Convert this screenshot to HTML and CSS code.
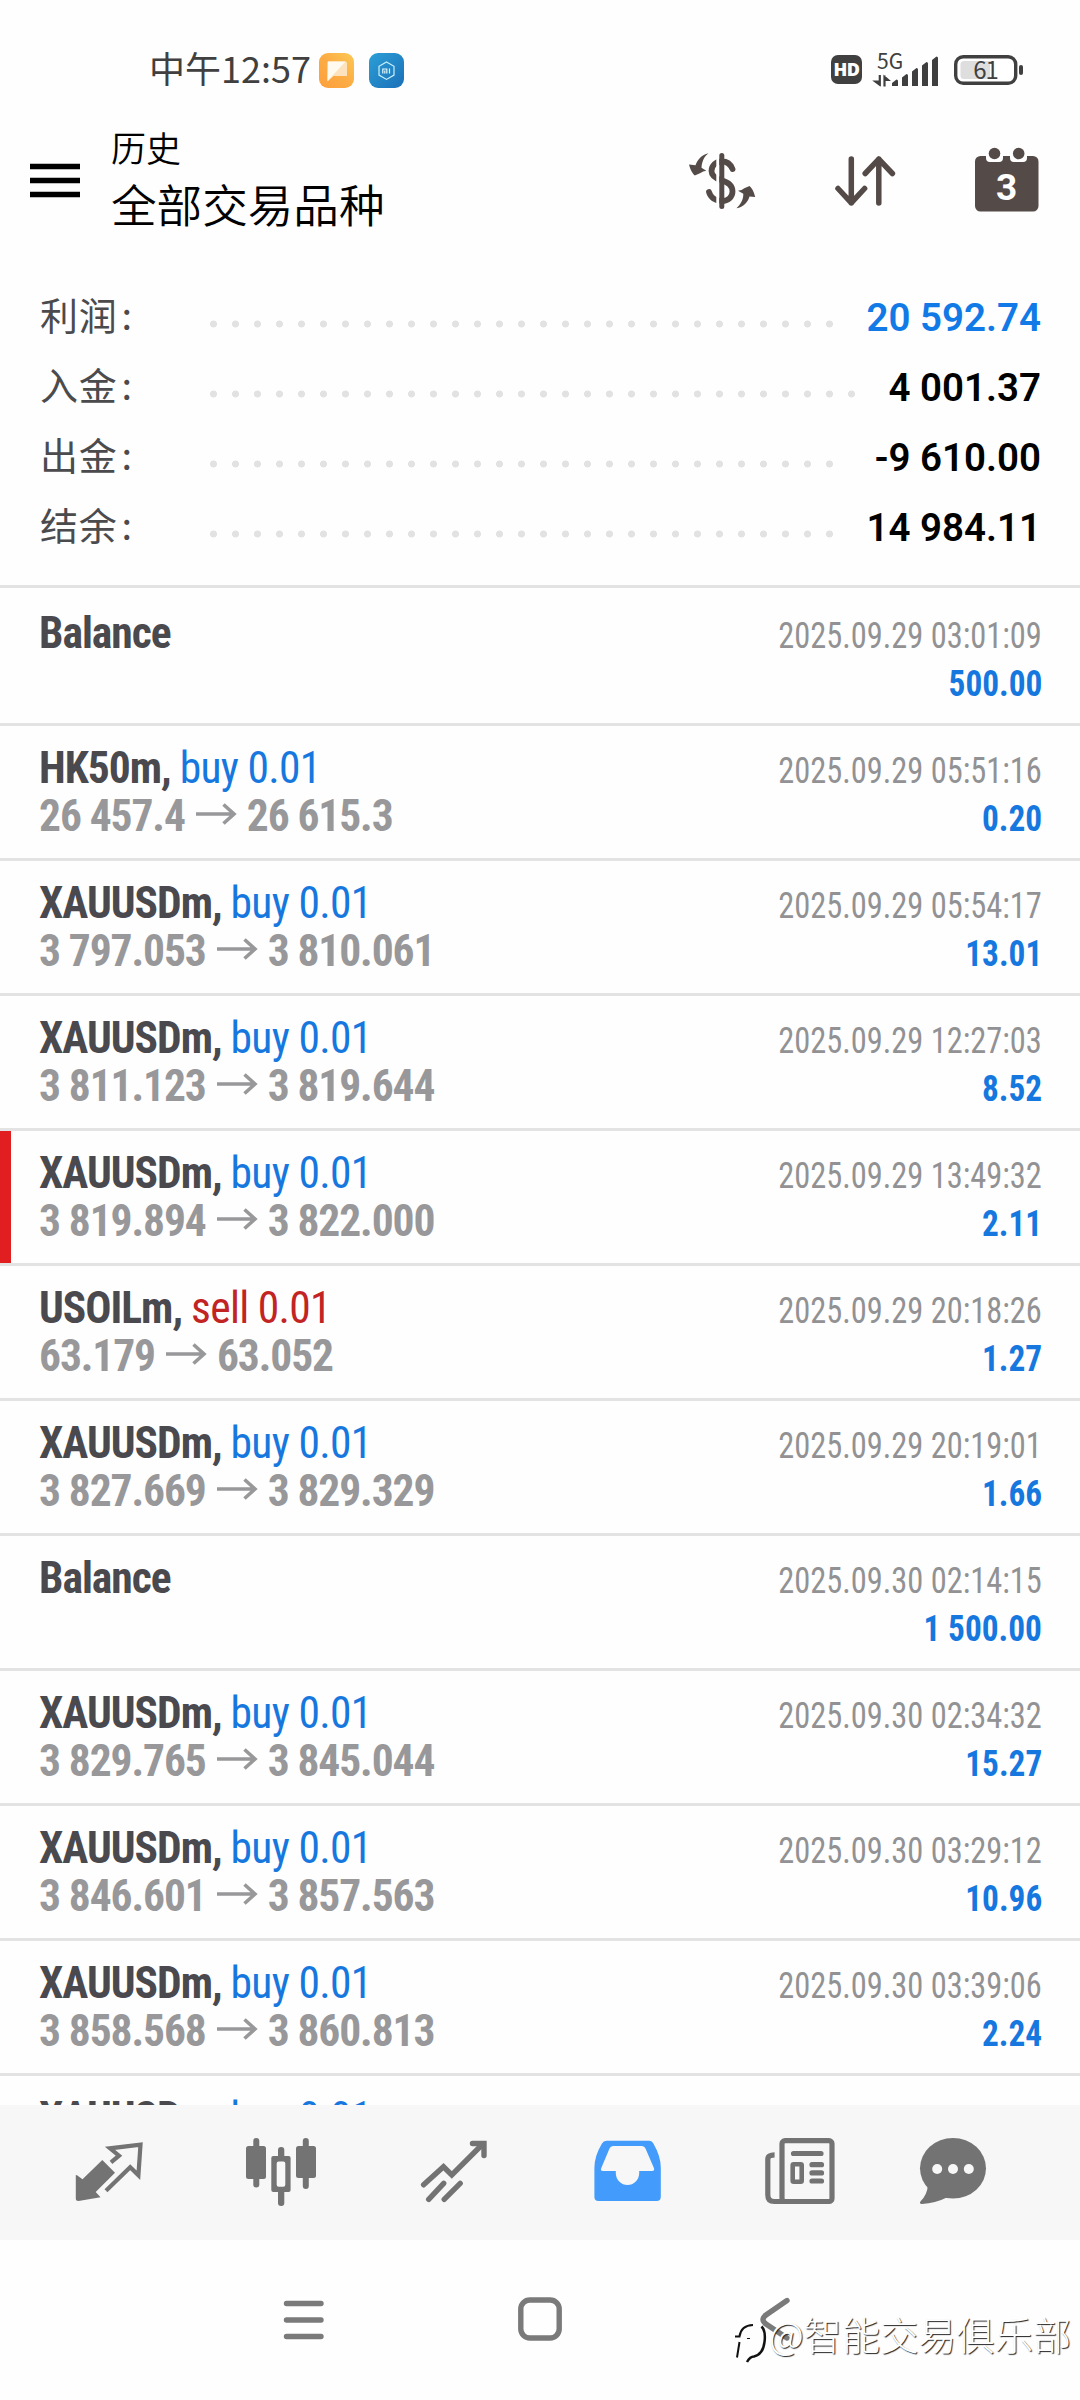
FILE: index.html
```html
<!DOCTYPE html>
<html lang="zh-CN">
<head>
<meta charset="utf-8">
<title>历史</title>
<link rel="stylesheet" href="styles.css">
</head>
<body>
<div class="screen">
  <div class="status">
    <span class="clock">中午12:57</span>
    <svg class="app-icon" width="35" height="35" viewBox="0 0 35 35">
      <defs>
        <linearGradient id="orange" x1="0" y1="1" x2="1" y2="0"><stop offset="0" stop-color="#fd9f3c"/><stop offset=".5" stop-color="#fcac44"/><stop offset="1" stop-color="#fcc954"/></linearGradient>
        <linearGradient id="blue" x1="0" y1="0" x2="1" y2="1"><stop offset="0" stop-color="#2b9fd6"/><stop offset="1" stop-color="#1b6fb8"/></linearGradient>
      </defs>
      <rect width="35" height="35" rx="9" fill="url(#orange)"/>
      <path d="M9 8.500h17.500a1.500 1.500 0 0 1 1.500 1.500v13H14.500L8.500 28.500V9z" fill="#fde3bd"/>
      <path d="M9 8.500h17.500L8.500 28z" fill="#fffaf0"/>
    </svg>
    <svg class="app-icon second" width="35" height="35" viewBox="0 0 35 35">
      <rect width="35" height="35" rx="9" fill="url(#blue)"/>
      <path d="M17.500 9l7.500 4.300v8.800l-7.500 4.300-7.500-4.300v-8.800z" fill="none" stroke="#c9f1fb" stroke-width="1.200"/>
      <path d="M13.800 20.500v-4.500h4v4.500M15.800 17.500v3M20.500 15.500v5" fill="none" stroke="#dff7fc" stroke-width="1.200"/>
    </svg>
    <div class="status-right">
      <span class="hd">HD</span>
      <svg class="signal" width="70" height="36" viewBox="0 0 70 36">
        <text x="5" y="17.500" class="net">5G</text>
        <path d="M7.800 24v11M3.500 30.500h4v3zM12.500 24.500v11M16 29h-3.500v-3z" class="sig-arrows"/>
        <path d="M20 35v-3l4.500-3.500q1.500 0 1.500 1.500v5zM30 35V26.500l4.500-3.500q1.500 0 1.500 1.500V35zM40 35V20.500l4.500-3.500q1.500 0 1.500 1.500V35zM50 35V14.500l4.500-3.500q1.500 0 1.500 1.500V35zM60 35V9l4.500-3.500q1.500 0 1.500 1.500V35z" fill="#3f3f3f"/>
      </svg>
      <svg class="battery" width="70" height="32" viewBox="0 0 70 32">
        <rect x="1.700" y="2.700" width="60" height="26.600" rx="7.500" fill="#fff" stroke="#404040" stroke-width="3.400"/>
        <path d="M10 7h26v18H10a3.500 3.500 0 0 1-3.500-3.500v-11A3.500 3.500 0 0 1 10 7z" fill="#dedede"/>
        <rect x="65" y="11" width="4" height="10" rx="2" fill="#404040"/>
        <text x="31.500" y="24.500" class="level">61</text>
      </svg>
    </div>
  </div>

  <header class="header">
    <svg class="menu" width="50" height="36" viewBox="0 0 50 36"><path d="M0 3.500h50M0 17.500h50M0 31.500h50" stroke="#000" stroke-width="5.500"/></svg>
    <div class="titles">
      <div class="sub">历史</div>
      <div class="main">全部交易品种</div>
    </div>
    <div class="actions">
      <svg width="90" height="80" viewBox="0 0 90 80">
        <g fill="none" stroke="#544a47" stroke-width="5.800" stroke-linecap="round">
          <path d="M52.500 29c-2-5-6-7.500-10.500-7.500-6 0-10.500 4-10.500 9.500 0 5 4 7.500 10.500 9.500 7 2 10.500 5.500 10.500 11 0 5.500-4.500 9.500-10.500 9.500-6.500 0-11.500-3.500-13-9"/>
        </g>
        <path d="M37.800 15v52" stroke="#fff" stroke-width="3"/>
        <path d="M41.800 15.500v51" stroke="#544a47" stroke-width="5" stroke-linecap="round"/>
        <path d="M28.500 13.200c-4 3-6.500 7.500-7 14.500l4.800 3q-3.500.5-5.800 2.200l-5.700 2.600q-4-3.500-5.800-11l6.500.8c2-5.500 6-10.500 13-12.100z" fill="#544a47"/>
        <path d="M56.500 68.300c4-4 7-8.500 6.800-14.500l-5.300-3q4-.5 6.300-2.500l5.200-2.300q3.500 2.500 5.700 11l-5.700-.6c-1.500 5.500-6 10.500-13 11.900z" fill="#544a47"/>
      </svg>
      <svg width="90" height="80" viewBox="0 0 90 80"><path d="M31.300 19v44M18 48.500l13.300 14.300 13.300-14.300M58.800 63V19M45.200 33.500l13.600-14.300 13.600 14.300" fill="none" stroke="#544a47" stroke-width="5.500" stroke-linecap="round" stroke-linejoin="round"/></svg>
      <svg width="90" height="80" viewBox="0 0 90 80">
        <rect x="15" y="16" width="63.500" height="55.500" rx="5.500" fill="#544a47"/>
        <path d="M26 12h17v6q0 4-4 4h-9q-4 0-4-4zM50 12h17v6q0 4-4 4h-9q-4 0-4-4z" fill="#fff"/>
        <circle cx="34.500" cy="13.500" r="5.800" fill="#544a47"/><circle cx="58.700" cy="13.500" r="5.800" fill="#544a47"/>
        <text x="46.700" y="59.800" class="day">3</text>
      </svg>
    </div>
  </header>

  <section class="summary">
    <div class="sum"><span class="label">利润<i>:</i></span><span class="dots"></span><b class="blue">20 592.74</b></div>
    <div class="sum"><span class="label">入金<i>:</i></span><span class="dots long"></span><b>4 001.37</b></div>
    <div class="sum"><span class="label">出金<i>:</i></span><span class="dots"></span><b>-9 610.00</b></div>
    <div class="sum"><span class="label">结余<i>:</i></span><span class="dots"></span><b>14 984.11</b></div>
  </section>

  <main class="list" id="list"></main>

  <nav class="tabs">
    <svg width="80" height="80" viewBox="0 0 80 80"><path d="M43 30.300l8-6.600-9-7.400 30.500-3.600-2.100 30.600-8.200-8L38 58.700" fill="none" stroke="#737373" stroke-width="4.200"/><path d="M9 43.300l5.500 3.900L34.300 28 47 40.700 27.700 60l4.800 5.300L10.500 69q-2.700 0-2.700-2.500V43z" fill="#737373"/></svg>
    <svg width="80" height="80" viewBox="0 0 80 80" fill="#737373"><rect x="12.300" y="6" width="6" height="49.500" rx="3"/><rect x="5" y="14" width="20" height="33" rx="2.500"/><rect x="61.800" y="6" width="6" height="51" rx="3"/><rect x="55" y="14" width="20" height="32" rx="2.500"/><rect x="37" y="15" width="6.300" height="59" rx="3"/><rect x="30.300" y="24" width="19.300" height="36" rx="2"/><rect x="35.700" y="29.500" width="8.600" height="25.300" rx="2" fill="#f7f7f7"/></svg>
    <svg width="80" height="80" viewBox="0 0 80 80" fill="none" stroke="#737373" stroke-width="5.400" stroke-linecap="round"><path d="M9.600 52.800l19.900-18L37.800 43l31-31M14.700 67.300l15-16M30.200 67.300l16-16" stroke-linejoin="miter"/><path d="M58.500 11.500H70v12"/></svg>
    <svg width="80" height="80" viewBox="0 0 80 80"><path fill-rule="evenodd" d="M19.500 8.700h42.500q3 0 4.500 3 7.300 12.500 7.300 24v29q0 4.300-4.300 4.300h-58q-4.100 0-4.100-4.300v-29q0-11.500 7.400-24 1.700-3 4.700-3zM26 14q-2.500 0-3.500 2.500L14.300 36q-1.300 3 1.700 3h12.800v2a11.700 12 0 0 0 23.400 0v-2H65q3 0 1.900-3l-8.400-19.500q-1-2.500-3.500-2.500z" fill="#439cfb"/></svg>
    <svg width="80" height="80" viewBox="0 0 80 80" fill="none" stroke="#737373" stroke-width="5.200"><rect x="22" y="8.700" width="50" height="60.800" rx="3"/><path d="M14.600 22.800q-6.800 0-6.800 4.500V63q0 6.500 6.500 6.500H25"/><path d="M33.500 21.500h27.500M52 32.700h9.500M52 40.900h9.500M52 49h9.500" stroke-linecap="round"/><rect x="32.700" y="32.200" width="9" height="17.500" rx="1" stroke-width="4.600"/></svg>
    <svg width="80" height="80" viewBox="0 0 80 80"><path d="M36 64.500Q22 71.500 9 72q-3.500-.5-1.200-3Q14 63 15 53z" fill="#737373"/><ellipse cx="40" cy="36.300" rx="33" ry="30.300" fill="#737373"/><g fill="#f7f7f7"><circle cx="24.200" cy="37" r="5"/><circle cx="40" cy="37" r="5"/><circle cx="55.800" cy="37" r="5"/></g></svg>
  </nav>

  <div class="sysnav">
    <svg width="44" height="44" viewBox="0 0 44 44"><path d="M4.500 6.500h34.500M4.500 23h34.500M4.500 39.500h34.500"/></svg>
    <svg width="44" height="44" viewBox="0 0 44 44"><rect x="2.800" y="3" width="38.400" height="38" rx="9"/></svg>
    <svg width="44" height="44" viewBox="0 0 44 44"><path d="M33 3.500L12 18q-6 4.500 0 9l21 14"/></svg>
  </div>

  <div class="watermark">
    <svg width="36" height="44" viewBox="0 0 36 44"><path d="M3 14.500h4.500q1.500-11 13.500-11.500M7.500 20L5 35.500" /><path d="M15 16.500h3" stroke-width="1"/><path d="M29.500 4.500Q34 9 32.500 20 31 32.500 22 34.500q-4 0-7 5.500" stroke-width="2.500"/></svg>
    <span>@智能交易俱乐部</span>
  </div>
</div>
<script src="history.js"></script>
</body>
</html>
```
FILE: history.js
```js
const deals = [
  ["Balance", "", "", "2025.09.29 03:01:09", "500.00"],
  ["HK50m", "buy 0.01", "26 457.4|26 615.3", "2025.09.29 05:51:16", "0.20"],
  ["XAUUSDm", "buy 0.01", "3 797.053|3 810.061", "2025.09.29 05:54:17", "13.01"],
  ["XAUUSDm", "buy 0.01", "3 811.123|3 819.644", "2025.09.29 12:27:03", "8.52"],
  ["XAUUSDm", "buy 0.01", "3 819.894|3 822.000", "2025.09.29 13:49:32", "2.11", "marked"],
  ["USOILm", "sell 0.01", "63.179|63.052", "2025.09.29 20:18:26", "1.27"],
  ["XAUUSDm", "buy 0.01", "3 827.669|3 829.329", "2025.09.29 20:19:01", "1.66"],
  ["Balance", "", "", "2025.09.30 02:14:15", "1 500.00"],
  ["XAUUSDm", "buy 0.01", "3 829.765|3 845.044", "2025.09.30 02:34:32", "15.27"],
  ["XAUUSDm", "buy 0.01", "3 846.601|3 857.563", "2025.09.30 03:29:12", "10.96"],
  ["XAUUSDm", "buy 0.01", "3 858.568|3 860.813", "2025.09.30 03:39:06", "2.24"],
  ["XAUUSDm", "buy 0.01", "", "", ""]
];
const arrow = '<svg class="arrow" width="40" height="22" viewBox="0 0 40 22"><path d="M0 11h38M27.500 1.500L38 11l-10.500 9.500"/></svg>';

document.getElementById("list").innerHTML = deals.map(([symbol, action, prices, time, profit, mark]) => {
  const side = action.startsWith("sell") ? "sell" : "buy";
  const name = action ? `${symbol}, <span class="${side}">${action}</span>` : symbol;
  const [open, close] = prices.split("|");
  const range = close ? `<span>${open}</span>${arrow}<span>${close}</span>` : "&nbsp;";
  return `<article class="deal ${mark || ""}">
    <div class="line"><span class="name">${name}</span><span class="time">${time}</span></div>
    <div class="line"><span class="range">${range}</span><span class="profit">${profit}</span></div>
  </article>`;
}).join("");
```
FILE: styles.css
```css
* { box-sizing: border-box; }
body { margin: 0; background: #fefefe; }
svg { display: block; flex: none; overflow: visible; }
.screen {
  position: relative;
  width: 1080px;
  height: 2400px;
  overflow: hidden;
  display: flex;
  flex-direction: column;
  font-family: Roboto, "Noto Sans CJK SC", sans-serif;
  color: #000;
}

.status {
  flex: none;
  height: 100px;
  padding: 53px 57px 0 149px;
  display: flex;
  align-items: flex-start;
  color: #404040;
}
.clock {
  width: 170px;
  font: 400 36px/36px "Noto Sans CJK SC", sans-serif;
  margin-top: -4px;
  white-space: nowrap;
}
.second { margin-left: 15px; }
.status-right { margin-left: auto; display: flex; align-items: flex-start; }
.hd {
  width: 31px;
  height: 29px;
  margin: 2px 10px 0 0;
  border-radius: 7px;
  background: #404040;
  color: #fff;
  font: 800 18px/29px "Open Sans", sans-serif;
  letter-spacing: -.5px;
  text-align: center;
}
.signal { margin-right: 12px; margin-top: -2px; }
.net { font: 400 21px "Noto Sans CJK SC", sans-serif; fill: #404040; }
.sig-arrows { fill: #3f3f3f; stroke: #3f3f3f; stroke-width: 2.2; }
.battery { margin: 1px -1px 0 0; }
.level { font: 400 24px "Noto Sans CJK SC", sans-serif; fill: #404040; text-anchor: middle; letter-spacing: -1px; }

.header {
  flex: none;
  height: 160px;
  padding: 0 30px;
  display: flex;
  align-items: center;
}
.menu { margin-top: 1px; }
.titles { margin: -6px 0 0 31px; font-family: "Noto Sans CJK SC", sans-serif; font-weight: 350; }
.sub { font-size: 35px; line-height: 52px; }
.main { font-size: 45.6px; line-height: 60px; }
.actions { margin-left: auto; display: flex; gap: 50px; }
.day { font: 700 37px Roboto, sans-serif; fill: #fff; text-anchor: middle; }

.summary {
  flex: none;
  height: 328px;
  padding: 22px 39px 0 40px;
  border-bottom: 3px solid #e3e3e3;
}
.sum { height: 70px; display: flex; align-items: center; }
.label {
  width: 170px;
  margin-top: -6px;
  display: flex;
  align-items: center;
  color: #4b4b4d;
  font: 400 38px/70px "Noto Sans CJK SC", sans-serif;
  letter-spacing: .8px;
}
.label i { font-style: normal; margin-left: 4px; }
.dots {
  width: 638px;
  height: 8px;
  margin-top: 14px;
  background: radial-gradient(circle at 3.5px 4px, #e2e2e2 3.2px, transparent 3.8px) 0 0 / 22px 8px repeat-x;
}
.dots.long { width: 652px; }
.sum b { margin-left: auto; font-size: 38.5px; font-weight: 650; }
.sum .blue { color: #127ae6; }

.list {
  flex: 1;
  min-height: 0;
  overflow: hidden;
  font-stretch: 75%;
}
.deal {
  height: 135px;
  padding: 19px 38px 0 39px;
  border-bottom: 3px solid #e3e3e3;
}
.deal:first-child { height: 138px; padding-top: 22px; }
.deal.marked { background: linear-gradient(#e21f20, #e21f20) 0 0 / 11px 100% no-repeat; }
.line {
  height: 48px;
  display: flex;
  justify-content: space-between;
  align-items: baseline;
  line-height: 48px;
  white-space: nowrap;
}
.name { font-size: 43.5px; font-weight: 700; color: #4a494e; letter-spacing: -1px; }
.name span { font-weight: 400; letter-spacing: -.7px; }
.buy { color: #1678df; }
.sell { color: #c22424; }
.range { display: flex; align-items: baseline; font-size: 43.5px; font-weight: 700; color: #98989a; letter-spacing: -1.1px; }
.arrow { margin: 0 11px; transform: translateY(-6px); fill: none; stroke: #98989a; stroke-width: 3.6; }
.time { font-size: 36px; color: #929294; transform: scaleX(.9); transform-origin: right; }
.profit { font-size: 36px; font-weight: 700; color: #1678df; transform: scaleX(.925); transform-origin: right; }

.tabs {
  flex: none;
  height: 135px;
  padding: 0 0 2px 68px;
  display: flex;
  align-items: center;
  gap: 93px;
  background: #f7f7f7;
}
.tabs svg:last-child { margin-left: -20px; }

.sysnav {
  flex: none;
  height: 160px;
  padding: 57px 0 0 282px;
  display: flex;
  gap: 192px;
}
.sysnav svg { fill: none; stroke: #7a7a7a; stroke-width: 5.4; stroke-linecap: round; }

.watermark {
  position: absolute;
  left: 732px;
  top: 2302px;
  display: flex;
  align-items: center;
  color: #fff;
  font: 300 38.2px/54px "Noto Sans CJK SC", sans-serif;
  text-shadow: 1px 1px 1px #222;
  white-space: nowrap;
}
.watermark svg { margin: 20px 1px 0 0; fill: none; stroke: #111; stroke-width: 2; }
```
